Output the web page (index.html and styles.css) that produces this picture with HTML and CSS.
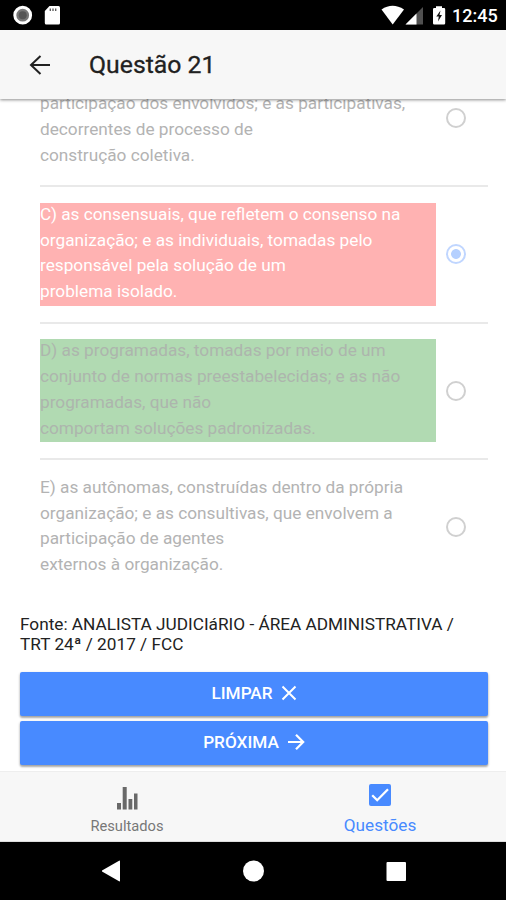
FILE: index.html
```html
<!DOCTYPE html>
<html lang="pt-BR">
<head>
<meta charset="utf-8">
<title>Questão 21</title>
<link rel="stylesheet" href="styles.css">
</head>
<body>
<div class="screen">
  <div class="status">
    <svg class="status-left" width="64" height="30" viewBox="0 0 64 30">
      <circle cx="22.700" cy="15.200" r="7.900" fill="#777" stroke="#fff" stroke-width="3"/>
      <circle cx="22.700" cy="15.200" r="4" fill="#555"/>
      <path d="M49.500 6H58.500q1.500 0 1.500 1.500V23q0 1.500-1.500 1.500H46.300q-1.500 0-1.500-1.500V11z" fill="#fff"/>
      <path d="M50.300 8.500v2.500M53 8.500v2.500M55.700 8.500v2.500" stroke="#555" stroke-width="1.300"/>
    </svg>
    <svg class="status-right" width="70" height="30" viewBox="0 0 70 30">
      <path d="M0.500 9.500Q11.500 2 23 9.500L11.700 24.500z" fill="#fff"/>
      <path d="M42 7V24.500H24.500z" fill="#505050"/>
      <path d="M35.500 13.500V24.500H24.500z" fill="#fff"/>
      <path d="M55 6.300h6v1.700h2q1.200 0 1.200 1.200v14.100q0 1.200-1.200 1.200H53.200q-1.200 0-1.200-1.200V9.200q0-1.200 1.200-1.200H55z" fill="#fff"/>
      <path d="M59.500 10.500l-4.200 6h2.500l-.8 5 4-6.500h-2.500z" fill="#111"/>
    </svg>
    <span class="clock">12:45</span>
  </div>
  <header class="header">
    <svg class="back" width="22" height="22" viewBox="0 0 22 22"><path d="M11.500 2L2 11l9.500 9M2.200 11H21" fill="none" stroke="#222" stroke-width="2"/></svg>
    <h1>Questão 21</h1>
  </header>
  <main class="content">
    <div class="options">
      <div class="option first">
        <div class="answer"><p>participação dos envolvidos; e as participativas,<br>decorrentes de processo de<br>construção coletiva.</p></div>
        <span class="radio"></span>
      </div>
      <div class="option">
        <div class="answer wrong"><p>C) as consensuais, que refletem o consenso na<br>organização; e as individuais, tomadas pelo<br>responsável pela solução de um<br>problema isolado.</p></div>
        <span class="radio checked"></span>
      </div>
      <div class="option">
        <div class="answer right"><p>D) as programadas, tomadas por meio de um<br>conjunto de normas preestabelecidas; e as não<br>programadas, que não<br>comportam soluções padronizadas.</p></div>
        <span class="radio"></span>
      </div>
      <div class="option">
        <div class="answer"><p>E) as autônomas, construídas dentro da própria<br>organização; e as consultivas, que envolvem a<br>participação de agentes<br>externos à organização.</p></div>
        <span class="radio"></span>
      </div>
    </div>
    <p class="source">Fonte: ANALISTA JUDICIáRIO - ÁREA ADMINISTRATIVA /<br>TRT 24ª / 2017 / FCC</p>
    <div class="actions">
      <button>LIMPAR <svg width="16" height="16" viewBox="0 0 16 16"><path d="M1.500 1.500l13 13M14.500 1.500l-13 13" stroke="#fff" stroke-width="2"/></svg></button>
      <button>PRÓXIMA <svg width="18" height="18" viewBox="0 0 18 18"><path d="M1 9H16M9 1.700L16.200 9 9 16.300" fill="none" stroke="#fff" stroke-width="2.200"/></svg></button>
    </div>
  </main>
  <nav class="tabs">
    <div class="tab">
      <svg width="22" height="24" viewBox="0 0 22 24"><path d="M1 17h4v6.500H1zM6.700 1h4v22.500h-4zM12.500 13h3.800v10.500h-3.800zM18 7.500h3.500v16H18z" fill="#696969"/></svg>
      <span>Resultados</span>
    </div>
    <div class="tab active">
      <svg width="24" height="24" viewBox="0 0 24 24"><rect x="1" y="1" width="22" height="22" rx="2" fill="#488aff"/><path d="M4.200 12.200l5 5L20 6.300" fill="none" stroke="#fff" stroke-width="2.300"/></svg>
      <span>Questões</span>
    </div>
  </nav>
  <div class="system">
    <svg width="506" height="58" viewBox="0 0 506 58"><path d="M102 28.500L119.500 18.500q.5 0 .5 1v19q0 1-.5 1L102 29.500z" fill="#fff"/><circle cx="253.500" cy="29" r="10.500" fill="#fff"/><rect x="386.500" y="20" width="19.500" height="19" rx="1" fill="#fff"/></svg>
  </div>
</div>
</body>
</html>
```
FILE: styles.css
```css
* { box-sizing: border-box; }
body { margin: 0; font-family: Roboto, "Liberation Sans", sans-serif; background: #fff; }
svg { display: block; flex: none; }
.screen { width: 506px; height: 900px; display: flex; flex-direction: column; overflow: hidden; }
.status { height: 30px; flex: none; background: #000; display: flex; align-items: center; }
.status-right { margin-left: 317px; }
.clock { margin-left: 1px; color: #fff; font-size: 18px; font-weight: 500; line-height: 30px; padding-top: 2px; }
.header { height: 69px; flex: none; background: #f7f7f7; display: flex; align-items: center; padding-left: 29px; box-shadow: 0 1px 3px rgba(0,0,0,.45); position: relative; z-index: 1; }
.header h1 { margin: 0 0 0 38px; font-size: 24.800px; font-weight: 400; color: #212121; -webkit-text-stroke: .3px #212121; }
.content { flex: 1; min-height: 0; overflow: hidden; padding: 0 18px 0 20px; }
.options { padding-left: 20px; }
.option { height: 136.500px; display: flex; align-items: center; border-bottom: 2px solid #e9e9e9; }
.option:last-child { border-bottom-color: transparent; }
.option.first { height: 88px; align-items: flex-start; }
.answer { display: flow-root; width: 396px; height: 103px; font-size: 17.230px; line-height: 25.800px; color: #b3b3b3; white-space: nowrap; }
.answer p { margin: -1px 0 0; }
.first .answer { height: 71px; }
.first .answer p { margin-top: -8px; }
.first .radio { margin-top: 9px; }
.wrong { background: #ffb2b2; color: #fff; }
.right { background: #b1dab2; color: #adb5ad; }
.radio { width: 20px; height: 20px; margin-left: 10px; border: 2px solid #d0d0d0; border-radius: 50%; }
.checked { border-color: #c0d6ff; background: radial-gradient(circle, #b5d0ff 0 4.500px, transparent 5.300px); }
.source { margin: 17px 0 0; font-size: 17.230px; line-height: 20px; color: #222; white-space: nowrap; }
.actions { display: flex; flex-direction: column; gap: 5px; margin-top: 18px; }
button { height: 44px; border: 0; border-radius: 2px; background: #488aff; color: #fff; font: 500 17.200px Roboto, sans-serif; display: flex; align-items: center; justify-content: center; gap: 8px; padding: 0 0 1px; box-shadow: 0 2px 2px rgba(0,0,0,.25), 0 1px 3px rgba(0,0,0,.2); }
.tabs { height: 71px; flex: none; background: #f7f7f7; border-top: 1px solid #eee; border-bottom: 1px solid #ddd; display: flex; }
.tab { flex: 1; display: flex; flex-direction: column; align-items: center; padding: 14px 0 0 1px; font-size: 14.700px; line-height: 20px; color: #777; }
.tab span { margin-top: 6px; }
.active { padding-top: 11px; font-size: 17.200px; color: #488aff; }
.active span { margin-top: 8px; }
.system { height: 58px; flex: none; background: #000; }
```
